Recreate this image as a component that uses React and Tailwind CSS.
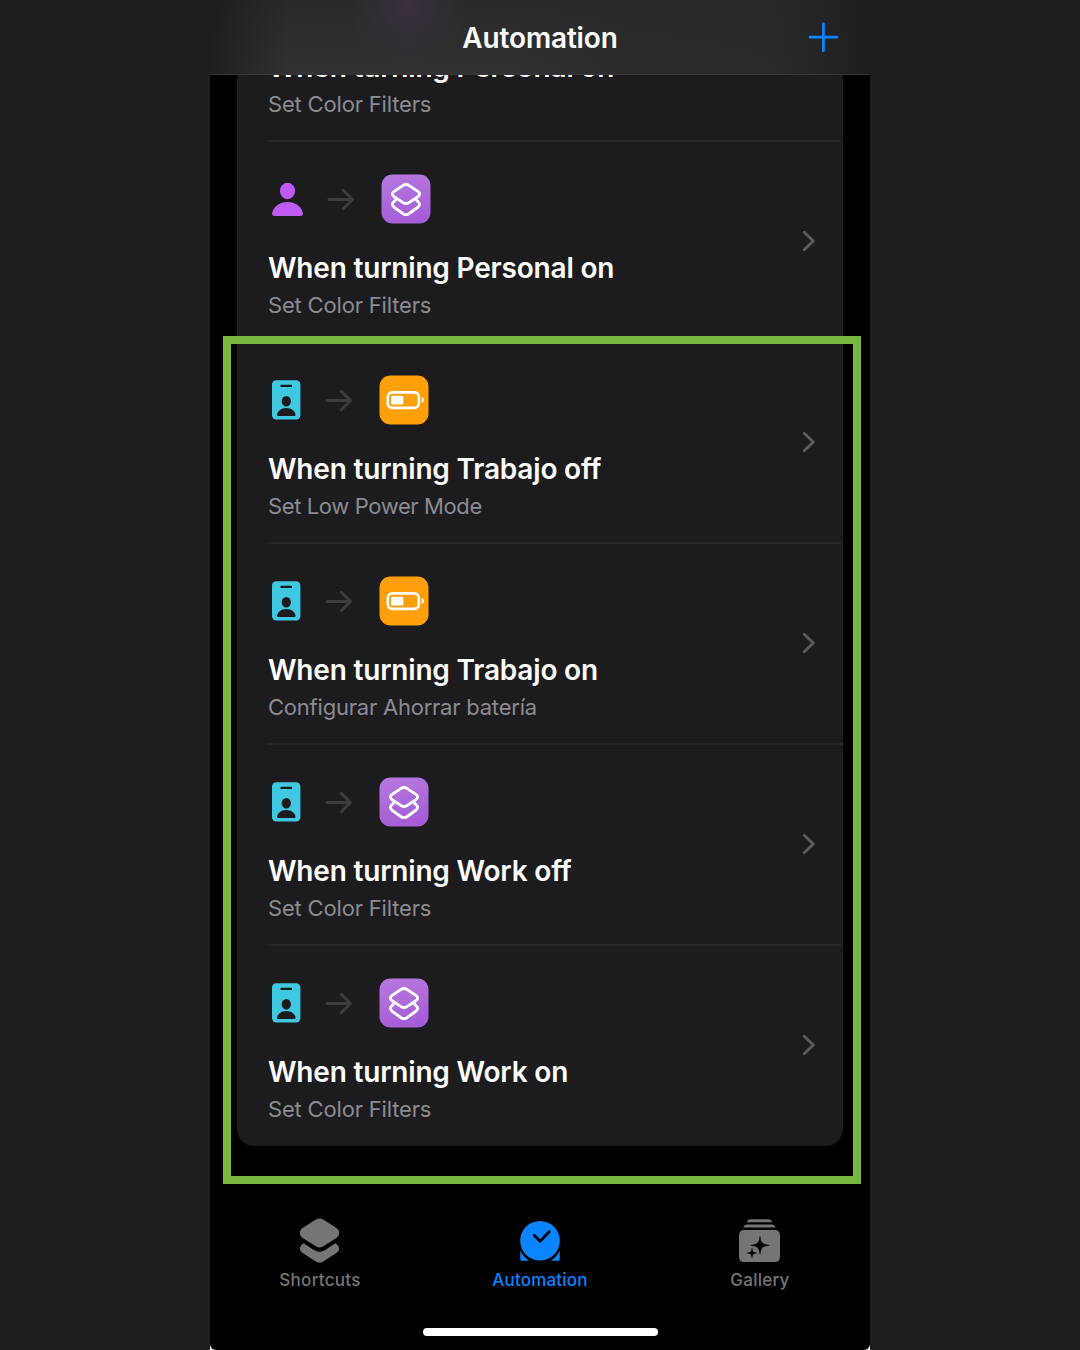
import React from "react";

const PersonIcon = () => (
  <svg width="36" height="50" viewBox="0 0 36 50" fill="#bf5af2">
    <ellipse cx="19.5" cy="17" rx="7.6" ry="8.2" />
    <path d="M6.5 42C5 42 4 41.2 4.1 39.6C4.6 34 10.5 28 19.5 28S34.4 34 34.9 39.6C35 41.2 34 42 32.5 42Z" />
  </svg>
);

const BadgeIcon = () => (
  <svg width="34" height="50" viewBox="0 0 34 50">
    <rect x="4" y="5.3" width="28.4" height="39.2" rx="4.2" fill="#40c8e0" />
    <rect x="12.3" y="9.7" width="11.8" height="2.4" rx="1.2" fill="#1c1c1e" />
    <ellipse cx="18.3" cy="26.2" rx="4.6" ry="5.2" fill="#1c1c1e" />
    <path d="M10.5 41C9.3 41 8.9 40.3 9.1 39.2C9.8 36 13.2 33 18.3 33S26.8 36 27.5 39.2C27.7 40.3 27.3 41 26.1 41Z" fill="#1c1c1e" />
  </svg>
);

const Arrow = () => (
  <svg width="28" height="24" viewBox="0 0 28 24" fill="none" stroke="#3d3d41" strokeWidth="3" strokeLinecap="round" strokeLinejoin="round">
    <path d="M2 12.5H25.5M16.3 3.3L25.5 12.5L16.3 21.7" />
  </svg>
);

const ShortcutsTile = () => (
  <svg width="50" height="50" viewBox="0 0 50 50">
    <defs>
      <linearGradient id="tile" x1="0" y1="0" x2="0.25" y2="1">
        <stop offset="0" stopColor="#b779df" />
        <stop offset="1" stopColor="#a65ed6" />
      </linearGradient>
    </defs>
    <rect x="0.5" y="0.5" width="49" height="49" rx="11" fill="url(#tile)" />
    <g transform="translate(0.5 0.5)" fill="none" stroke="white" strokeWidth="2.9" strokeLinejoin="round">
      <path d="M14.6 25.2L12.7 26.8C10.3 28.6 10.3 31 12.7 32.8L21.6 39.2C23.6 40.5 25.4 40.5 27.4 39.2L36.3 32.8C38.7 31 38.7 28.6 36.3 26.8L34.4 25.2" />
      <path d="M21.6 10.9C23.6 9.6 25.4 9.6 27.4 10.9L36.3 16.9C38.7 18.7 38.7 20.5 36.3 22.3L27.4 28.1C25.4 29.4 23.6 29.4 21.6 28.1L12.7 22.3C10.3 20.5 10.3 18.7 12.7 16.9Z" />
    </g>
  </svg>
);

const BatteryTile = () => (
  <svg width="50" height="50" viewBox="0 0 50 50">
    <rect x="0.5" y="0.5" width="49" height="49" rx="11" fill="#ff9f0a" />
    <rect x="8.8" y="17.3" width="31" height="15.6" rx="4.6" fill="none" stroke="white" strokeWidth="2.7" />
    <rect x="12" y="20.7" width="12.4" height="8.8" rx="1.3" fill="white" />
    <path d="M42.7 22.1C45.6 23.1 45.6 27.1 42.7 28.1Z" fill="white" />
  </svg>
);

const rows = [
  { title: "When turning Personal on", sub: "Set Color Filters", Icon: PersonIcon, Tile: ShortcutsTile, st: "tracking-[-0.18px]", line: false },
  { title: "When turning Trabajo off", sub: "Set Low Power Mode", Icon: BadgeIcon, Tile: BatteryTile, st: "tracking-[-0.38px]", line: true },
  { title: "When turning Trabajo on", sub: "Configurar Ahorrar batería", Icon: BadgeIcon, Tile: BatteryTile, st: "tracking-[-0.22px]", line: true },
  { title: "When turning Work off", sub: "Set Color Filters", Icon: BadgeIcon, Tile: ShortcutsTile, st: "tracking-[-0.18px]", line: true },
  { title: "When turning Work on", sub: "Set Color Filters", Icon: BadgeIcon, Tile: ShortcutsTile, st: "tracking-[-0.18px]", line: false },
];

const Labels = ({ title, sub, st }) => (
  <>
    <div className="h-9 text-[28px] leading-9 font-semibold tracking-[-0.19px] whitespace-nowrap text-white">{title}</div>
    <div className={`mt-[3px] h-8 text-[22px] leading-8 whitespace-nowrap text-[#8b8b91] ${st}`}>{sub}</div>
  </>
);

const Row = ({ Icon, Tile, line, ...labels }) => (
  <div className="ml-[31px] flex h-[201px] justify-between">
    <div className="flex grow flex-col">
      <div className="mt-[33px] flex h-[50px] items-center">
        <Icon />
        <span className="ml-[22.5px]"><Arrow /></span>
        <span className="ml-[26px]"><Tile /></span>
      </div>
      <div className="mt-[26px] grow">
        <Labels {...labels} />
      </div>
      {line && <div className="-mr-[42px] h-0.5 translate-y-px bg-[#272729]" />}
    </div>
    <svg className="mt-[88px] mr-[26px] shrink-0" width="16" height="24" viewBox="0 0 16 24" fill="none" stroke="#5b5b60" strokeWidth="2.9" strokeLinecap="round" strokeLinejoin="round">
      <path d="M3.2 3.2L12.3 12L3.2 20.8" />
    </svg>
  </div>
);

const Tab = ({ label, color, track, children }) => (
  <div className={`flex w-[220px] flex-col items-center ${color}`}>
    <svg width="48" height="48" viewBox="0 0 48 48" fill="currentColor">{children}</svg>
    <div className={`mt-1 text-[17px] leading-6 font-medium whitespace-nowrap ${track}`}>{label}</div>
  </div>
);

export default function App() {
  return (
    <div className="flex h-[1350px] w-[1080px] justify-center overflow-hidden bg-[#1e1e20] font-['Inter',sans-serif]">
      <div className="h-full w-[660px] bg-linear-to-t from-white from-[8px] to-transparent to-[8px]">
        <div className="relative flex h-full flex-col overflow-hidden rounded-b-[6px] bg-black">
          <header className="relative z-10 flex h-[75px] shrink-0 items-center border-b border-[#363638] bg-[radial-gradient(circle_at_198px_5px,#3a303e_0,transparent_60px),linear-gradient(to_right,#1e1e20_0,transparent_80px,transparent_300px,#29292bb0_400px,#28282ac0_560px,#1e1e20_100%),linear-gradient(to_bottom,#29292b,#323234)]">
            <h1 className="w-full pt-px text-center text-[28px] leading-9 font-semibold tracking-[-0.15px] text-white">Automation</h1>
            <svg className="absolute top-[22px] right-[31px]" width="31" height="31" viewBox="0 0 31 31" stroke="#0a84ff" strokeWidth="2.8" strokeLinecap="round">
              <path d="M2 15.2H29M15.4 1.8V28.8" />
            </svg>
          </header>
          <main className="mx-[27px] h-[1071px] shrink-0 overflow-hidden rounded-b-[17px] bg-[#1c1c1e]">
            <div className="-mt-[26px] ml-[31px] flex h-[92px] flex-col justify-between">
              <div><Labels title="When turning Personal on" sub="Set Color Filters" st="tracking-[-0.18px]" /></div>
              <div className="h-0.5 translate-y-px bg-[#272729]" />
            </div>
            {rows.map((r) => <Row key={r.title} {...r} />)}
          </main>
          <nav className="mt-[70px] flex">
            <Tab label="Shortcuts" color="text-[#757575]" track="tracking-[0.3px]">
              <path d="M7.6 27.2C2.9 30.1 2.9 34.5 6.7 37.1L19 45.1C22.3 47.3 24.8 47.3 28.1 45.1L40.4 37.1C44.2 34.5 44.2 30.1 39.5 27.2L29.5 33.8C25.5 36.4 21.6 36.4 17.6 33.8Z" />
              <path d="M19 4C22.3 1.9 24.8 1.9 28.1 4L40.4 12C44.2 14.7 44.2 19.1 40.4 21.9L28.1 29.8C24.8 32 22.3 32 19 29.8L6.7 21.9C2.9 19.1 2.9 14.7 6.7 12Z" />
            </Tab>
            <Tab label="Automation" color="text-[#0a84ff]" track="tracking-[0.2px]">
              <circle cx="24" cy="24.7" r="19.8" />
              <path d="M4.3 34.8C6.5 39.2 9.2 42.2 13.1 44.8H5.8C4.8 44.8 4.3 44.3 4.3 43.3ZM43.7 34.8C41.5 39.2 38.8 42.2 34.9 44.8H42.2C43.2 44.8 43.7 44.3 43.7 43.3Z" />
              <path d="M18.2 19.3L24.2 25.2L33.2 15.8" fill="none" stroke="black" strokeWidth="2.7" strokeLinecap="round" strokeLinejoin="round" />
            </Tab>
            <Tab label="Gallery" color="text-[#757575]" track="tracking-[0.25px]">
              <g transform="translate(-1 0)">
                <path d="M11.9 6.2C12.5 4 13.7 3.2 15.5 3.2H33.5C35.3 3.2 36.5 4 37.1 6.2ZM8.3 11.6C9 9.2 10.3 8.4 12.5 8.4H36.5C38.7 8.4 40 9.2 40.7 11.6Z" />
                <rect x="4" y="14.1" width="41" height="32" rx="5" />
                <path d="M25 20.2C25.8 26.8 27.2 28.4 34.3 29.3C27.2 30.2 25.8 31.8 25 38.4C24.2 31.8 22.8 30.2 15.7 29.3C22.8 28.4 24.2 26.8 25 20.2ZM17 32.2C17.4 35.8 18.2 36.5 21.8 37C18.2 37.5 17.4 38.2 17 41.8C16.6 38.2 15.8 37.5 12.2 37C15.8 36.5 16.6 35.8 17 32.2Z" fill="black" stroke="black" strokeWidth="0.5" />
              </g>
            </Tab>
          </nav>
          <div className="mx-auto mt-9 h-2 w-[235px] shrink-0 rounded-full bg-white" />
          <div className="absolute top-[336px] left-[13px] z-20 h-[848px] w-[638px] border-[8px] border-[#77b83f]" />
        </div>
      </div>
    </div>
  );
}
